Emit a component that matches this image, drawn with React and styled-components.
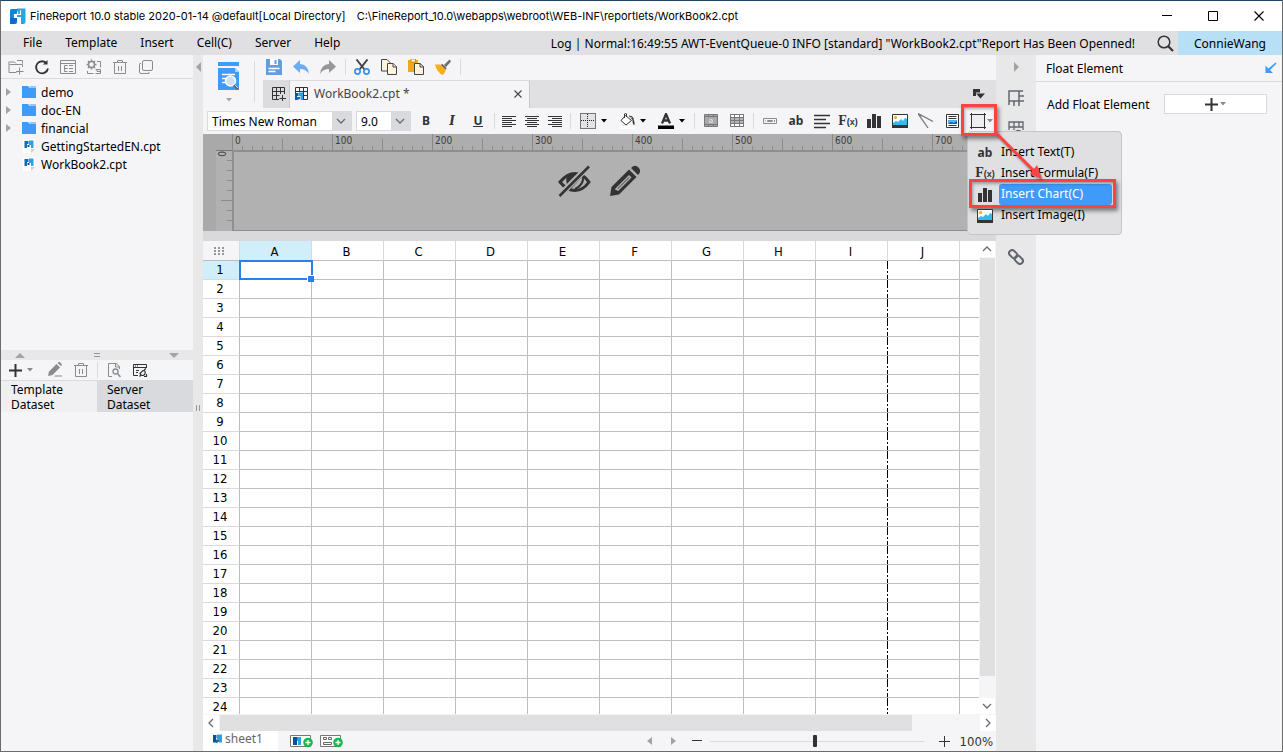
import React from "react";
import styled, { createGlobalStyle, css } from "styled-components";

const c = {
  panel: "#f5f5f7",
  bar: "#e0e0e3",
  split: "#e8e8e8",
  line: "#d9dadd",
  blue: "#3f9bf9",
  ink: "#333334",
};

const Global = createGlobalStyle`
  * { box-sizing: border-box; }
  body {
    margin: 0;
    font: 12px/15px "Noto Sans", "DejaVu Sans Condensed", sans-serif;
    color: #000;
  }
  button, select, input { font: inherit; color: inherit; }
  button { border: 0; padding: 0; background: none; }
  svg { display: block; }
`;

/* ---------- window frame ---------- */
const Window = styled.div`
  display: flex;
  flex-direction: column;
  height: 100vh;
  min-height: 480px;
  border: 1px solid #6b6b6b;
  border-top-color: #1c4568;
  background: ${c.panel};
  overflow: hidden;
`;
const TitleBar = styled.header`
  display: flex;
  align-items: center;
  flex: none;
  height: 30px;
  padding-left: 8px;
  background: #fff;
  font: 11px/15px Inter, "Noto Sans", sans-serif;
  white-space: pre;
`;
const TitleText = styled.span`
  margin-left: 4px;
`;
const TitlePath = styled.span`
  margin-left: 11px;
  flex: 1;
`;
const WindowButton = styled.button`
  display: grid;
  place-items: center;
  width: 46px;
  height: 30px;
`;
const MenuBar = styled.nav`
  display: flex;
  align-items: center;
  flex: none;
  height: 24px;
  padding-left: 11px;
  background: ${c.bar};
  white-space: nowrap;
`;
const MenuItem = styled.button`
  height: 24px;
  padding: 0 12px 1px 11px;
`;
const LogText = styled.span`
  margin-left: auto;
`;
const SearchButton = styled.button`
  display: grid;
  place-items: center;
  width: 43px;
  padding-left: 18px;
`;
const UserButton = styled.button`
  width: 104px;
  height: 24px;
  background: #b7dff5;
`;
const Body = styled.div`
  display: flex;
  flex: 1;
  min-height: 0;
`;

/* ---------- left side ---------- */
const Side = styled.aside`
  display: flex;
  flex-direction: column;
  flex: none;
  width: 192px;
`;
const SideTools = styled.div`
  display: flex;
  align-items: center;
  flex: none;
  height: ${(p) => p.$h}px;
  padding-left: 2px;
  border-bottom: 1px solid ${c.line};
`;
const Tool = styled.button`
  display: grid;
  place-items: center;
  flex: none;
  width: ${(p) => p.$w || 26}px;
  height: 22px;
  color: ${c.ink};
`;
const Tree = styled.ul`
  flex: 268 1 0;
  min-height: 0;
  margin: 0;
  padding: 4px 0 0;
  list-style: none;
  overflow: hidden;
`;
const TreeRow = styled.li`
  display: flex;
  align-items: center;
  height: 18px;
  padding-left: 5px;
`;
const TreeSlot = styled.span`
  width: ${(p) => p.$w}px;
  margin-right: ${(p) => p.$gap}px;
`;
const SplitBar = styled.div`
  display: flex;
  align-items: center;
  justify-content: space-between;
  flex: none;
  height: 10px;
  padding: 0 14px;
  background: ${c.split};
`;
const DataSets = styled.section`
  flex: 392 1 0;
  min-height: 0;
`;
const DataTabs = styled.div`
  display: flex;
`;
const DataTab = styled.button`
  flex: 1 1 0;
  min-width: 0;
  height: 31px;
  padding: 0 30px 0 10px;
  text-align: left;
  background: ${(p) => (p.$on ? "#f0f0f2" : "#d9dadd")};
`;
const VSplit = styled.div`
  display: flex;
  flex-direction: column;
  align-items: center;
  justify-content: space-between;
  flex: none;
  width: 10px;
  padding: 7px 0 340px;
  background: ${c.split};
`;

/* ---------- centre ---------- */
const Main = styled.main`
  display: flex;
  flex-direction: column;
  flex: 1;
  min-width: 0;
`;
const TopArea = styled.div`
  display: flex;
  flex: none;
  height: 53px;
`;
const PreviewButton = styled.button`
  display: flex;
  flex-direction: column;
  align-items: center;
  gap: 7px;
  flex: none;
  width: 51px;
  padding-top: 7px;
`;
const TopRule = styled.div`
  width: 1px;
  margin: 6px 8px 6px 0;
  background: ${c.line};
`;
const TopRight = styled.div`
  flex: 1;
  min-width: 0;
`;
const QuickTools = styled.div`
  display: flex;
  align-items: center;
  height: 25px;
  padding: 0 0 2px 3px;
`;
const QuickTool = styled.button`
  width: 16px;
  margin-right: 11px;
`;
const QuickRule = styled.span`
  width: 1px;
  height: 16px;
  margin: 0 8px 0 -2px;
  background: ${c.line};
`;
const TabStrip = styled.div`
  display: flex;
  align-items: center;
  height: 28px;
  background: ${c.bar};
`;
const AddTab = styled.button`
  display: grid;
  place-items: center;
  width: 27px;
  height: 28px;
  padding-left: 6px;
  border-right: 1px solid #c9c9cc;
  background: #dcdcdf;
`;
const FileTab = styled.div`
  display: flex;
  align-items: center;
  width: 240px;
  height: 28px;
  padding: 0 7px 2px 5px;
  border-right: 1px solid #c9c9cc;
  border-top: 1px solid ${c.line};
  background: ${c.panel};
  color: #444;
`;
const FileName = styled.span`
  flex: 1;
  margin-left: 5px;
`;
const TabMenu = styled.button`
  margin: 0 11px 0 auto;
`;
const FormatBar = styled.div`
  display: flex;
  align-items: center;
  flex: none;
  height: 26px;
  padding-left: 4px;
`;
const SelectBox = styled.label`
  position: relative;
  display: flex;
  width: ${(p) => p.$w}px;
  height: 20px;
  margin-right: ${(p) => p.$gap}px;
  border: 1px solid ${c.line};
  background: linear-gradient(to left, ${c.line} 19px, #fff 19px);
`;
const Select = styled.select`
  flex: 1;
  width: 100%;
  padding: 0 0 0 4px;
  border: 0;
  background: none;
  appearance: none;
`;
const SelectArrow = styled.span`
  position: absolute;
  right: 5px;
  top: 4px;
  pointer-events: none;
`;
const DropTool = styled.button`
  display: flex;
  align-items: center;
  gap: 5px;
  flex: none;
  width: 39px;
  height: 22px;
  padding-left: 6px;
`;
const FormatRule = styled.span`
  flex: none;
  width: 1px;
  height: 16px;
  margin: 0 3px;
  background: ${c.line};
`;
const Letter = styled.span`
  font-weight: bold;
  font-size: 12px;
  line-height: 14px;
  color: ${c.ink};
  ${(p) => p.$italic && css`font-style: italic; font-family: "DejaVu Serif", serif;`}
  ${(p) => p.$under && css`border-bottom: 1px solid ${c.ink}; line-height: 11px;`}
`;
const Fx = styled.span`
  font: bold 14px/15px "Liberation Serif", serif;
  color: ${c.ink};
`;
const FxSmall = styled.span`
  font: bold 9px/15px "Liberation Sans", sans-serif;
`;

/* insert drop-down and its call-outs */
const InsertWrap = styled.div`
  position: relative;
  flex: none;
  z-index: 5;
`;
const InsertButton = styled.button`
  display: flex;
  align-items: center;
  height: 22px;
  padding-left: 4px;
`;
const Mark = styled.span`
  position: absolute;
  border: 3px solid #fc4343;
  box-shadow: 2px 3px 4px rgba(0, 0, 0, 0.45), inset 1px 2px 3px rgba(0, 0, 0, 0.3);
  pointer-events: none;
`;
const ButtonMark = styled(Mark)`
  left: -4px;
  top: -6px;
  width: 36px;
  height: 32px;
`;
const ItemMark = styled(Mark)`
  inset: -5px -4px -3px 1px;
`;
const Arrow = styled.svg`
  position: absolute;
  left: 29px;
  top: 21px;
  pointer-events: none;
  filter: drop-shadow(1px 2px 1px rgba(0, 0, 0, 0.35));
`;
const Menu = styled.ul`
  position: absolute;
  left: 2px;
  top: 21px;
  width: 155px;
  height: 104px;
  margin: 0;
  padding: 10px 9px 0 0;
  list-style: none;
  border: 1px solid #c6c6c9;
  border-radius: 4px;
  background: ${c.bar};
`;
const MenuRow = styled.li`
  position: relative;
`;
const MenuAction = styled.button`
  display: flex;
  align-items: center;
  width: 100%;
  height: 21px;
  white-space: nowrap;
  text-align: left;
`;
const MenuIcon = styled.span`
  display: grid;
  place-items: center;
  width: 31px;
  padding-left: 3px;
`;
const MenuLabel = styled.span`
  flex: 1;
  padding: 2px 0 4px 2px;
  border-radius: 3px;
  ${(p) => p.$on && css`background: ${c.blue}; color: #fff;`}
`;

/* rulers */
const RulerArea = styled.div`
  flex: none;
  display: grid;
  grid-template: 16px 81px / 29px 1fr;
  height: 97px;
  background: #a9a9a9;
`;
const HRuler = styled.div`
  grid-column: 2;
  display: flex;
  overflow: hidden;
  background: #adadad;
`;
const Segment = styled.span`
  flex: 0 0 100px;
  padding-left: 2px;
  border-left: 1px solid #888;
  font: 10px/14px "DejaVu Sans Condensed", sans-serif;
  color: #3c3c3c;
  background:
    linear-gradient(#8c8c8c, #8c8c8c) 49px 100% / 1px 11px no-repeat,
    repeating-linear-gradient(to right, transparent 0 9px, #8c8c8c 9px 10px) 0 100% / 99px 4px no-repeat;
`;
const VRuler = styled.div`
  margin-left: 13px;
  border-top: 1px solid #777;
  font: 10px/10px "DejaVu Sans Condensed", sans-serif;
  color: #3c3c3c;
  background:
    linear-gradient(#8c8c8c, #8c8c8c) 100% 49px / 11px 1px no-repeat,
    repeating-linear-gradient(to bottom, transparent 0 9px, #8c8c8c 9px 10px) 100% 0 / 5px 79px no-repeat,
    #b1b1b1;
`;
const VLabel = styled.span`
  display: block;
  width: 10px;
  writing-mode: vertical-rl;
`;
const Stage = styled.div`
  display: flex;
  justify-content: center;
  align-items: flex-start;
  gap: 18px;
  padding: 13px 32px 0 0;
  border: solid #8f8f8f;
  border-width: 2px 0 1px 2px;
  background: #b1b1b1;
`;
const Gap = styled.div`
  flex: none;
  height: 10px;
  background: #d9d9db;
`;

/* sheet */
const SheetArea = styled.div`
  display: flex;
  flex: 1;
  min-height: 0;
`;
const SheetView = styled.div`
  flex: 1;
  min-width: 0;
  overflow: hidden;
  background: #fff;
`;
const Sheet = styled.table`
  width: 100%;
  table-layout: fixed;
  border-collapse: separate;
  border-spacing: 0;
  font: 13px/15px "DejaVu Sans Condensed", sans-serif;
`;
const Col = styled.col`
  width: ${(p) => (p.$w ? p.$w + "px" : "auto")};
`;
const HeadCell = styled.th`
  height: ${(p) => (p.$row ? 19 : 20)}px;
  padding: ${(p) => (p.$row ? "0 2px 2px 0" : "2px 2px 0 0")};
  border: solid ${c.line};
  border-width: 0 ${(p) => (p.$last ? 0 : 1)}px 1px 0;
  border-bottom-color: ${(p) => (p.$row ? c.line : "#bdbdbd")};
  border-right-color: ${(p) => (p.$row ? "#bdbdbd" : c.line)};
  font-weight: normal;
  background: ${(p) => (p.$on ? "#d0effb" : p.$corner ? c.panel : "#fff")};
`;
const Cell = styled.td`
  position: relative;
  height: 19px;
  padding: 0;
  border: solid #bdbdbd;
  border-width: 0 ${(p) => (p.$last ? 0 : 1)}px 1px 0;
  ${(p) => p.$page && css`
    border-right: 0;
    background: repeating-linear-gradient(to bottom, #000 0 8px, #fff 8px 10px, #000 10px 12px, #fff 12px 14px) 100% 0 / 1px 100% no-repeat;
  `}
`;
const Selection = styled.span`
  position: absolute;
  z-index: 1;
  inset: -1px -2px -1px -1px;
  border: 2px solid #2d7ee9;
  &::after {
    content: "";
    position: absolute;
    right: -3px;
    bottom: -4px;
    width: 6px;
    height: 6px;
    background: #2d7ee9;
    border: solid #fff;
    border-width: 1px 0 0 1px;
  }
`;
const VScroll = styled.div`
  display: flex;
  flex-direction: column;
  flex: none;
  width: 17px;
`;
const HScroll = styled.div`
  display: flex;
  flex: none;
  height: 17px;
  padding-top: 1px;
`;
const ScrollButton = styled.button`
  display: grid;
  place-items: center;
  flex: none;
  width: 16px;
  height: 16px;
  background: #fff;
`;
const Track = styled.div`
  flex: 1;
  display: flex;
  flex-direction: ${(p) => (p.$col ? "column" : "row")};
  padding: ${(p) => (p.$col ? "1px 1px 0 1px" : "0 0 0 1px")};
`;
const Thumb = styled.div`
  flex: 0 0 ${(p) => p.$size};
  background: #e0e0e0;
`;
const Footer = styled.footer`
  display: flex;
  align-items: center;
  flex: none;
  height: 20px;
  padding-right: 3px;
  color: #333;
`;
const SheetTab = styled.button`
  display: flex;
  align-items: center;
  gap: 3px;
  width: 75px;
  height: 20px;
  padding: 0 0 5px 10px;
  background: #fff;
  color: #666;
`;
const AddSheet = styled.button`
  margin-left: ${(p) => p.$gap}px;
`;
const Spacer = styled.span`
  flex: 1;
`;
const FootButton = styled.button`
  display: grid;
  place-items: center;
  width: ${(p) => p.$w}px;
`;
const Zoom = styled.input`
  width: 214px;
  height: 14px;
  margin: 0 10px 0 1px;
  appearance: none;
  background: linear-gradient(${c.line}, ${c.line}) 0 50% / 100% 1px no-repeat;
  &::-webkit-slider-thumb {
    appearance: none;
    width: 4px;
    height: 12px;
    border-radius: 1px;
    background: ${c.ink};
  }
`;
const ZoomValue = styled.output`
  width: 39px;
  font: 13px/15px "DejaVu Sans Condensed", sans-serif;
  text-align: right;
`;

/* ---------- right side ---------- */
const IconStrip = styled.div`
  display: flex;
  flex-direction: column;
  align-items: center;
  flex: none;
  width: 40px;
  background: ${c.split};
`;
const StripButton = styled.button`
  display: grid;
  place-items: center;
  width: 40px;
  height: ${(p) => p.$h}px;
  margin-bottom: ${(p) => p.$gap || 0}px;
`;
const Inspector = styled.aside`
  flex: none;
  width: 246px;
`;
const InspectorHead = styled.div`
  display: flex;
  align-items: center;
  justify-content: space-between;
  height: 27px;
  padding: 0 5px 0 10px;
  border-bottom: 1px solid ${c.line};
`;
const InspectorRow = styled.div`
  display: flex;
  align-items: center;
  justify-content: space-between;
  padding: 12px 15px 0 11px;
`;
const AddFloat = styled.button`
  display: flex;
  align-items: center;
  justify-content: center;
  gap: 2px;
  width: 103px;
  height: 20px;
  border: 1px solid ${c.line};
  background: #fff;
`;

/* ---------- icons ---------- */
const Svg = ({ w = 16, h = 16, s = "none", f = "none", sw = 1, children }) => (
  <svg width={w} height={h} viewBox={`0 0 ${w} ${h}`} stroke={s} fill={f} strokeWidth={sw} aria-hidden="true">
    {children}
  </svg>
);
const G = "#8b8b8e";

const Caret = ({ color = G }) => (
  <Svg w={6} h={4} f={color}><path d="M0 0h6L3 3.5z" /></Svg>
);
const Tri = ({ dir, w = 5, h = 8 }) => (
  <Svg w={w} h={h} f="#a3a3a6">
    <path d={{ r: `M0 0L${w} ${h / 2}L0 ${h}z`, l: `M${w} 0L0 ${h / 2}L${w} ${h}z`, u: `M0 ${h}L${w / 2} 0L${w} ${h}z`, d: `M0 0L${w / 2} ${h}L${w} 0z` }[dir]} />
  </Svg>
);
const Chevron = ({ dir = "d" }) => (
  <Svg w={10} h={10} s="#6c6c6f" sw={1.3}>
    <path d={{ d: "M1 3l4 4 4-4", u: "M1 7l4-4 4 4", l: "M7 1L3 5l4 4", r: "M3 1l4 4-4 4" }[dir]} />
  </Svg>
);
const Logo = () => (
  <Svg w={17} h={17}>
    <path d="M1 2.500Q1 1 2.500 1H8v5H5v4H1z" fill="#0b86d8" />
    <path d="M1 10h7v4q0 2-2 2H1z" fill="#0a6fc4" />
    <path d="M8 0.500h8.500V14q0 2-2 2H12V9H8z" fill="#22a9e4" />
    <path d="M8.500 3.500v3H5.500v3h6M11.500 2.500v4h-3" stroke="#fff" strokeWidth="1.200" />
  </Svg>
);
const MiniLogo = () => (
  <Svg w={9} h={9}>
    <path d="M0 1h3.500v3H3v4.500H0z" fill="#0c4f9c" />
    <path d="M4 0.500h5V8.500H6V5.500H4z" fill="#29a3df" />
    <path d="M3 5.500h3v2L4 9H3z" fill="#0b6fc0" />
  </Svg>
);
const CptFile = () => (
  <Svg w={14} h={14}>
    <path d="M1 0h12v9l-4 5H1z" fill="#fff" />
    <path d="M9 14v-4h4z" fill="#cfcfd1" />
    <path d="M2.500 2h4v3h-1.500v4H2.500z" fill="#0c6cc0" />
    <path d="M7 1.500h4.500V9H9V6H7z" fill="#29a3df" />
    <path d="M5.500 6h2v2h-2z" fill="#0c4f9c" />
  </Svg>
);
const Folder = () => (
  <Svg w={14} h={12} f={c.blue}>
    <path d="M0 0h6l1.500 2H14v10H0z" />
    <path d="M7 0.500h7v1H8z" />
  </Svg>
);
const NewFolder = () => (
  <Svg s={G}>
    <path d="M8.500 13.500h-7.500v-11M1.500 5.500h13V8M1.500 3h5l1.500 1.500M9 1.500h5.500v3M11.500 8.500v7M8 12.500h7.500" />
  </Svg>
);
const Refresh = () => (
  <Svg s="#333" sw={1.800}>
    <path d="M12.800 4.500A6 6 0 1 0 14 9.500" /><path d="M13.500 1v4.500H9z" fill="#333" stroke="none" />
  </Svg>
);
const ListWin = () => (
  <Svg s={G}>
    <path d="M0.500 1.500h15v13H0.500zM0.500 4.500h15M4.500 6.500v6h3M4.500 9.500h3M4.500 6.500h3M9 6.500h4M9 9.500h4M9 12.500h4" />
  </Svg>
);
const GearBox = () => (
  <Svg s={G}>
    <circle cx="5.500" cy="5.500" r="3" strokeWidth="1.500" /><path d="M5.500 0.500v2M5.500 8.500v2M0.500 5.500h2M8.500 5.500h2M2 2l1.500 1.500M7.500 7.500L9 9M2 9l1.500-1.500M7.500 3.500L9 2" strokeWidth="1.500" />
    <path d="M11 2.500h3.500v6M1.500 12v2.500h6M9.500 10.500h5v4h-5M11 10.500v2h3" />
  </Svg>
);
const Trash = () => (
  <Svg s={G}>
    <path d="M1 3.500h14M5.500 3V1.500h5V3M2.500 4v10.500h11V4M6.500 7v5M9.500 7v5" />
  </Svg>
);
const Stack = () => (
  <Svg s={G}>
    <rect x="4.500" y="1.500" width="10" height="10" rx="1.500" /><path d="M3 4.500H2Q1.500 4.500 1.500 5.500V13Q1.500 14.500 3 14.500H11V13" />
  </Svg>
);
const Plus = ({ size = 13, sw = 2, color = c.ink }) => (
  <Svg w={size} h={size} s={color} sw={sw}><path d={`M0 ${size / 2}h${size}M${size / 2} 0v${size}`} /></Svg>
);
const PencilSmall = () => (
  <Svg f={G}>
    <path d="M1 14l1-4.500L9.500 2l3.500 3.500L5.500 13zM10.500 1l1-1q1.500-.5 3.500 2.500l-1 1.500zM8 13.500h7v1H7z" />
  </Svg>
);
const DocSearch = () => (
  <Svg s={G}>
    <path d="M6 14.500H2.500v-13H10l3.500 3V7M9.500 1.500v3.500h4" /><circle cx="9.500" cy="9.500" r="2.500" strokeWidth="1.300" /><path d="M11.500 11.500l3 3.500" strokeWidth="1.500" />
  </Svg>
);
const DbLink = () => (
  <Svg s={c.ink}>
    <path d="M6 13.500H1.500V2.500h13V6M1.500 5.500h13M4 8.500h3M4 10.500h2M3 4h1M5 4h1" /><path d="M8 11.500l3-3q3 0 2 3t-4 1.500zM12 8l2-1.500M7.500 14.500l2-2M12 14.500h2.500V12" strokeWidth="1.200" />
  </Svg>
);
const Preview = () => (
  <Svg w={23} h={29}>
    <path d="M1 0h21v4H1zM1 6h17l4 4v18H1z" fill={c.blue} />
    <path d="M18 6v4h4z" fill="#a8d1fb" />
    <path d="M5 12.500h13M5 16.500h4M5 20.500h4" stroke="#fff" strokeWidth="1.500" />
    <circle cx="13.500" cy="19" r="5" fill="#cfdff0" stroke="#fff" strokeWidth="1.500" /><path d="M17 23l4 4" stroke="#666" strokeWidth="2.500" /><path d="M17.500 22.500l3.500 3.500" stroke="#ddd" />
  </Svg>
);
const Save = () => (
  <Svg>
    <path d="M0 0h14l2 2v14H0z" fill="#5f9fe0" /><path d="M4 0h8v6H4z" fill="#fff" /><path d="M8.500 1h2v4h-2z" fill="#5f9fe0" />
    <path d="M2.500 9.500h11M2.500 12.500h7" stroke="#fff" strokeWidth="1.300" />
  </Svg>
);
const Undo = () => (
  <Svg f="#6cadf2"><path d="M7 1v4q8 .5 9 10-3-5-9-5v4L0 7.500z" /></Svg>
);
const Redo = () => (
  <Svg f="#97979a"><path d="M9 1v4q-8 .5-9 10 3-5 9-5v4l7-6.500z" /></Svg>
);
const Cut = () => (
  <Svg>
    <path d="M2.500 0.500l8 10M13.500 0.500l-8 10" stroke="#444" strokeWidth="2" />
    <circle cx="3.500" cy="12.500" r="2.600" stroke="#3f8fe8" strokeWidth="1.700" /><circle cx="12.500" cy="12.500" r="2.600" stroke="#3f8fe8" strokeWidth="1.700" />
  </Svg>
);
const Copy = () => (
  <Svg s="#444" f="#fff5df">
    <path d="M0.500 0.500h5.500l3 3v8.500h-8.500z" /><path d="M6.500 4.500h5.500l3.500 3v8h-9z" /><path d="M12 4.500v3.500h3.500" />
  </Svg>
);
const Paste = () => (
  <Svg>
    <path d="M0 1h10v12H0z" fill="#f3a51c" /><path d="M3 0h4.500v3H3z" fill="#fff" stroke="#d48a10" />
    <path d="M6.500 4.500h5.500l3.500 3v8h-9z" fill="#fff5df" stroke="#444" /><path d="M12 4.500v3.500h3.500" stroke="#444" />
  </Svg>
);
const Brush = () => (
  <Svg>
    <path d="M14.500 0.500L16 2.500l-5 5.500-2-2z" fill="#6b6f7c" /><path d="M6.500 5.500l4.500 4.500" stroke="#666" strokeWidth="2.200" />
    <path d="M0 5.500l5.500 0 5.500 5.500-1 2L8 16q-6-2-8-10.500z" fill="#f6ae1b" />
  </Svg>
);
const GridPlus = () => (
  <Svg w={14} h={14} s={c.ink}>
    <path d="M7 12.500H0.500V0.500h12V7M0.500 4.500h12M0.500 8.500h7M4.500 0.500v12M8.500 0.500V7M10.500 8v6M7.500 11.500h6.500" />
  </Svg>
);
const GridDoc = () => (
  <Svg w={14} h={14}>
    <path d="M0.500 6V0.500h12v12H8M0.500 4.500h12M4.500 0.500v4M8.500 0.500v12M8.500 8.500h4" stroke={c.ink} />
    <path d="M0 6h3.500v3H2v4H0z" fill="#0c5aa8" /><path d="M4 5.500h4V13H5.500V9H4z" fill="#29a3df" /><path d="M2 10h3v2l-3 1z" fill="#0c6cc0" />
  </Svg>
);
const Cross = ({ size = 8, color = "#444" }) => (
  <Svg w={size} h={size} s={color} sw={1.100}><path d={`M.5 .5L${size - 0.5} ${size - 0.5}M${size - 0.5} .5L.5 ${size - 0.5}`} /></Svg>
);
const TabMenuIcon = () => (
  <Svg w={13} h={10} f={c.ink}><path d="M1 0h7v3.500H4V7H1zM4 4.500h9L8.500 9.500z" /></Svg>
);
const Align = ({ rows, w = 15, h = 12, step = 2, sw = 1 }) => (
  <Svg w={w} h={h} s={c.ink} sw={sw}>
    {rows.map(([x, len], i) => <path key={i} d={`M${x} ${i * step + 1.5}h${len}`} />)}
  </Svg>
);
const Borders = () => (
  <Svg s="#222"><rect x=".5" y=".5" width="15" height="15" fill="#e3e3e6" stroke="#000" strokeDasharray="1 1" /><path d="M7.500 1v14M1 7.500h14" strokeDasharray="1 1" /></Svg>
);
const Fill = () => (
  <Svg>
    <path d="M0 13h16v3H0z" fill="#fff" /><path d="M6.500 2.500l6 5-5.500 4.500-5-4.500z" fill="#fff" stroke="#333" /><path d="M5.500 5V1q1.500-1.500 2 0v3M10 3q4 0 4.500 3" stroke="#333" />
    <path d="M11 4q5 1 4.500 8-2 0-2-5z" fill="#333" />
  </Svg>
);
const FontColor = () => (
  <Svg>
    <path d="M0 12.500h16v3.500H0z" fill="#000" /><path d="M4 10.500L8 1 12 10.500M5.500 7.500h5" stroke={c.ink} strokeWidth="2.300" />
  </Svg>
);
const MergeCells = () => (
  <Svg w={14} h={14} s="#77777a">
    <path d="M.5 .5h13v12H.5z" fill="#a9a9ab" /><path d="M.5 2.500h13M.5 10.500h13M4.500 .5v2M9.500 .5v2M4.500 10.500v2M9.500 10.500v2" /><path d="M5.500 5.500h3v3h-3v-1.500h3" stroke="#d5d5d7" />
  </Svg>
);
const SplitCells = () => (
  <Svg w={14} h={14} s="#77777a">
    <path d="M.5 .5h13v12H.5z" fill="#fff" /><path d="M0 3h14v7H0z" fill="#b5b5b7" stroke="none" /><path d="M.5 .5h13v12H.5zM.5 3.500h13M.5 6.500h13M.5 9.500h13M4.500 .5v12M9.500 .5v12" />
  </Svg>
);
const Widget = () => (
  <Svg w={14} h={6} s={G}><path d="M.5 .5h13v5H.5zM2.500 2.500v1M4.500 2.500h5v1h-5zM11.500 2v2" /></Svg>
);
const Chart = () => (
  <Svg f={c.ink}><path d="M1 6h4v9H1zM6 1h4v14H6zM11 3h4v12h-4z" /></Svg>
);
const Picture = () => (
  <Svg w={16} h={14}>
    <path d="M.5 .5h15v13H.5z" fill="#fff" stroke={c.ink} /><path d="M0 11h16v3H0z" fill={c.ink} /><circle cx="3.500" cy="3.500" r="1.700" fill="#f2b03c" />
    <path d="M1 11V9l3-2 2 1 3-3 2 2 2-3 2 1v6z" fill="#35b9f1" />
  </Svg>
);
const Slash = () => (
  <Svg s="#77777a" sw={1.300}><path d="M0 .5l15 8M0 .5l10 14.500M0 1l4 2" /></Svg>
);
const SubReport = () => (
  <Svg w={13} h={14}>
    <path d="M.5 .5h12v13H.5z" fill="#fff" stroke={c.ink} /><path d="M2.500 2.500h8M2.500 4.500h8M2.500 11.500h8" stroke={c.ink} /><path d="M2 6h9v4H2z" fill="#4db1f0" /><path d="M2 10l3-2 3 1 3-2v3z" fill="#0d5da8" />
  </Svg>
);
const FrameIcon = () => (
  <Svg w={18} h={16} s="#333"><path d="M2.500 1.500h13v13h-13z" fill="#eeeef0" /><path d="M1 1.500h16M1 14.500h16M2.500 0v16M15.500 0v16" /></Svg>
);
const EyeOff = () => (
  <Svg w={33} h={32}>
    <path d="M2 17Q9 8.500 17 8.500T31 17Q25 25.500 17 25.500T2 17z" stroke="#333" strokeWidth="3" />
    <path d="M9 11q8-4 15 1l-11 12q-7-6-4-13z" fill="#333" /><path d="M25 11q1 9-8 13" stroke="#333" strokeWidth="2" />
    <path d="M30.500 1.500L1 31" stroke="#b1b1b1" strokeWidth="6" /><path d="M31 1.500L1.500 31" stroke="#333" strokeWidth="2.500" />
  </Svg>
);
const PencilBig = () => (
  <Svg w={32} h={32}>
    <path d="M1 31l1.500-9L20 4.500l7.500 7.500L10 29.500z" fill="#333" /><path d="M7 24L20 11l1.500 1.500L9 25z" fill="none" stroke="#b1b1b1" strokeWidth="1.500" />
    <path d="M22 3q4-4 7.500-.5T29 10z" fill="#333" />
  </Svg>
);
const SearchIcon = () => (
  <Svg w={17} h={17} s="#333" sw={1.500}><circle cx="7" cy="7" r="5.800" /><path d="M11 11l5 5" strokeWidth="2.200" /></Svg>
);
const CellAttr = () => (
  <Svg s="#62666f" sw={1.500}><path d="M1 15V1h14M1 11h15M11 1v15M11 6h5M6 11v5M1 1v14" /></Svg>
);
const CellEye = () => (
  <Svg s="#62666f" sw={1.300}><path d="M1 9V1h14v8M1 6h14M6 1v8M11 1v5M6 12q4-5 9 0-4 5-9 0z" /><circle cx="10.500" cy="12" r="1.500" /></Svg>
);
const LinkIcon = () => (
  <Svg s="#62666f" sw={2}>
    <rect x="-3" y="-4.500" width="6" height="9" rx="3" transform="translate(5.200 5.200) rotate(-45)" /><rect x="-3" y="-4.500" width="6" height="9" rx="3" transform="translate(10.800 10.800) rotate(-45)" />
  </Svg>
);
const PinArrow = () => (
  <Svg w={12} h={12} f={c.blue}><path d="M10.500 0.500L11.500 1.500 5 8 8 11H0.500V3.500L3.500 6.500z" /></Svg>
);
const DotGrid = () => (
  <Svg w={12} h={9} f="#97979a">
    {[0, 4, 8].map((x) => [0, 3, 6].map((y) => <rect key={`${x}-${y}`} x={x} y={y} width="2" height="2" />))}
  </Svg>
);
const AddSheetIcon = ({ kind }) => (
  <Svg w={23} h={14}>
    <path d="M.5 1.500h20v11H.5z" fill="#fff" stroke="#777" />
    {kind === "report" ? (
      <><path d="M3 3h4v8H3z" fill="#0c4f9c" /><path d="M7 3h4v8H8V7H7z" fill="#29a3df" /></>
    ) : (
      <path d="M3.500 3.500h3v2h-3zM8.500 3.500h3v2h-3zM3.500 8.500h8v2h-8z" stroke="#666" />
    )}
    <circle cx="18" cy="8.500" r="4.800" fill="#17b84e" /><path d="M15.500 8.500h5M18 6v5" stroke="#fff" strokeWidth="1.300" />
  </Svg>
);
const Formula = () => <Fx>F<FxSmall>(x)</FxSmall></Fx>;
const Ab = () => <Letter>ab</Letter>;

/* ---------- data ---------- */
const menus = ["File", "Template", "Insert", "Cell(C)", "Server", "Help"];
const tree = [
  ["demo", true], ["doc-EN", true], ["financial", true],
  ["GettingStartedEN.cpt", false], ["WorkBook2.cpt", false],
];
const columns = ["A", "B", "C", "D", "E", "F", "G", "H", "I", "J", ""];
const rows = Array.from({ length: 24 }, (_, i) => i + 1);
const insertItems = [
  ["Insert Text(T)", Ab], ["Insert Formula(F)", Formula],
  ["Insert Chart(C)", Chart, true], ["Insert Image(I)", Picture],
];
const sideTools = [
  ["New folder", NewFolder], ["Refresh", Refresh], ["Show path", ListWin],
  ["Manage", GearBox], ["Delete", Trash], ["Copy", Stack],
];
const left = [[0, 14], [0, 10], [0, 14], [0, 10], [0, 14], [0, 10]];
const center = [[0, 14], [2, 10], [0, 14], [2, 10], [0, 14], [2, 10]];
const right = [[0, 14], [4, 10], [0, 14], [4, 10], [0, 14], [4, 10]];

function SidePanel() {
  return (
    <Side>
      <SideTools $h={24}>
        {sideTools.map(([name, I]) => <Tool key={name} aria-label={name}><I /></Tool>)}
      </SideTools>
      <Tree>
        {tree.map(([name, folder]) => (
          <TreeRow key={name}>
            <TreeSlot $w={5} $gap={11}>{folder && <Tri dir="r" />}</TreeSlot>
            <TreeSlot $w={14} $gap={5}>{folder ? <Folder /> : <CptFile />}</TreeSlot>
            {name}
          </TreeRow>
        ))}
      </Tree>
      <SplitBar>
        <Tri dir="u" w={10} h={5} />
        <Svg w={6} h={4} s="#97979a"><path d="M0 .5h6M0 3.500h6" /></Svg>
        <Tri dir="d" w={10} h={5} />
      </SplitBar>
      <DataSets>
        <SideTools $h={21}>
          <DropTool aria-label="Add dataset"><Plus /><Caret /></DropTool>
          <Tool aria-label="Edit"><PencilSmall /></Tool>
          <Tool aria-label="Delete"><Trash /></Tool>
          <FormatRule />
          <Tool aria-label="Preview"><DocSearch /></Tool>
          <Tool aria-label="Connection"><DbLink /></Tool>
        </SideTools>
        <DataTabs>
          <DataTab $on>Template Dataset</DataTab>
          <DataTab>Server Dataset</DataTab>
        </DataTabs>
      </DataSets>
    </Side>
  );
}

function TopTools() {
  return (
    <TopArea>
      <PreviewButton aria-label="Preview"><Preview /><Caret color="#a3a3a6" /></PreviewButton>
      <TopRule />
      <TopRight>
        <QuickTools>
          <QuickTool aria-label="Save"><Save /></QuickTool>
          <QuickTool aria-label="Undo"><Undo /></QuickTool>
          <QuickTool aria-label="Redo"><Redo /></QuickTool>
          <QuickRule />
          <QuickTool aria-label="Cut"><Cut /></QuickTool>
          <QuickTool aria-label="Copy"><Copy /></QuickTool>
          <QuickTool aria-label="Paste"><Paste /></QuickTool>
          <QuickTool aria-label="Format painter"><Brush /></QuickTool>
          <QuickRule />
        </QuickTools>
        <TabStrip>
          <AddTab aria-label="New template"><GridPlus /></AddTab>
          <FileTab>
            <GridDoc /><FileName>WorkBook2.cpt *</FileName>
            <button aria-label="Close tab"><Cross /></button>
          </FileTab>
          <TabMenu aria-label="Open templates"><TabMenuIcon /></TabMenu>
        </TabStrip>
      </TopRight>
    </TopArea>
  );
}

function InsertMenu() {
  return (
    <InsertWrap>
      <InsertButton aria-label="Insert float element" aria-expanded="true"><FrameIcon /><Caret /></InsertButton>
      <Menu>
        {insertItems.map(([label, I, on]) => (
          <MenuRow key={label}>
            <MenuAction>
              <MenuIcon><I /></MenuIcon>
              <MenuLabel $on={on}>{label}</MenuLabel>
            </MenuAction>
            {on && <ItemMark />}
          </MenuRow>
        ))}
      </Menu>
      <ButtonMark />
      <Arrow width="56" height="54" viewBox="0 0 56 54" aria-hidden="true">
        <path d="M2 2l39 39" stroke="#fc4343" strokeWidth="3" /><path d="M36 43l7-9 5 14z" fill="#fc4343" />
      </Arrow>
    </InsertWrap>
  );
}

function Formatting() {
  return (
    <FormatBar>
      <SelectBox $w={145} $gap={4}>
        <Select aria-label="Font" defaultValue="t"><option value="t">Times New Roman</option></Select>
        <SelectArrow><Chevron /></SelectArrow>
      </SelectBox>
      <SelectBox $w={55} $gap={2}>
        <Select aria-label="Font size" defaultValue="9"><option value="9">9.0</option></Select>
        <SelectArrow><Chevron /></SelectArrow>
      </SelectBox>
      <Tool aria-label="Bold"><Letter>B</Letter></Tool>
      <Tool aria-label="Italic"><Letter $italic>I</Letter></Tool>
      <Tool aria-label="Underline"><Letter $under>U</Letter></Tool>
      <FormatRule />
      <Tool $w={23} aria-label="Align left"><Align rows={left} /></Tool>
      <Tool $w={23} aria-label="Align center"><Align rows={center} /></Tool>
      <Tool $w={23} aria-label="Align right"><Align rows={right} /></Tool>
      <FormatRule />
      <DropTool aria-label="Borders"><Borders /><Caret color="#000" /></DropTool>
      <DropTool aria-label="Fill color"><Fill /><Caret color="#000" /></DropTool>
      <DropTool aria-label="Font color"><FontColor /><Caret color="#000" /></DropTool>
      <FormatRule />
      <Tool aria-label="Merge cells"><MergeCells /></Tool>
      <Tool aria-label="Split cells"><SplitCells /></Tool>
      <FormatRule />
      <Tool aria-label="Widget"><Widget /></Tool>
      <Tool aria-label="Text"><Ab /></Tool>
      <Tool aria-label="Rich text"><Align w={16} h={15} step={4} sw={1.5} rows={[[0, 16], [0, 12], [0, 16], [0, 12]]} /></Tool>
      <Tool aria-label="Formula"><Formula /></Tool>
      <Tool aria-label="Chart"><Chart /></Tool>
      <Tool aria-label="Image"><Picture /></Tool>
      <Tool aria-label="Slope line"><Slash /></Tool>
      <Tool aria-label="Sub report"><SubReport /></Tool>
      <InsertMenu />
    </FormatBar>
  );
}

function SheetGrid() {
  return (
    <SheetArea>
      <SheetView>
        <Sheet>
          <colgroup>
            <Col $w={37} />
            {columns.map((n) => <Col key={n} $w={n ? 72 : 0} />)}
          </colgroup>
          <thead>
            <tr>
              <HeadCell $corner><FootButton as="span" $w={34}><DotGrid /></FootButton></HeadCell>
              {columns.map((n, i) => <HeadCell key={n} $on={i === 0} $last={!n}>{n}</HeadCell>)}
            </tr>
          </thead>
          <tbody>
            {rows.map((r) => (
              <tr key={r}>
                <HeadCell $row $on={r === 1}>{r}</HeadCell>
                {columns.map((n) => (
                  <Cell key={n} $page={n === "I"} $last={!n}>{r === 1 && n === "A" && <Selection />}</Cell>
                ))}
              </tr>
            ))}
          </tbody>
        </Sheet>
      </SheetView>
      <VScroll>
        <ScrollButton aria-label="Scroll up"><Chevron dir="u" /></ScrollButton>
        <Track $col><Thumb $size="95%" /></Track>
        <ScrollButton aria-label="Scroll down"><Chevron /></ScrollButton>
      </VScroll>
    </SheetArea>
  );
}

export default function App() {
  return (
    <Window>
      <Global />
      <TitleBar>
        <Logo />
        <TitleText>FineReport 10.0 stable 2020-01-14 @default[Local Directory]</TitleText>
        <TitlePath>C:\FineReport_10.0\webapps\webroot\WEB-INF\reportlets/WorkBook2.cpt</TitlePath>
        <WindowButton aria-label="Minimize"><Svg w={10} h={2} f="#000"><path d="M0 0h10v1H0z" /></Svg></WindowButton>
        <WindowButton aria-label="Maximize"><Svg w={10} h={10} s="#000"><path d="M.5 .5h9v9h-9z" /></Svg></WindowButton>
        <WindowButton aria-label="Close"><Cross size={10} color="#000" /></WindowButton>
      </TitleBar>
      <MenuBar>
        {menus.map((m) => <MenuItem key={m}>{m}</MenuItem>)}
        <LogText>Log | Normal:16:49:55 AWT-EventQueue-0 INFO [standard] "WorkBook2.cpt"Report Has Been Openned!</LogText>
        <SearchButton aria-label="Search"><SearchIcon /></SearchButton>
        <UserButton>ConnieWang</UserButton>
      </MenuBar>
      <Body>
        <SidePanel />
        <VSplit>
          <Tri dir="l" h={10} />
          <Svg w={4} h={6} s="#97979a"><path d="M.5 0v6M3.500 0v6" /></Svg>
        </VSplit>
        <Main>
          <TopTools />
          <Formatting />
          <RulerArea>
            <HRuler>{[0, 100, 200, 300, 400, 500, 600, 700].map((n) => <Segment key={n}>{n}</Segment>)}</HRuler>
            <VRuler><VLabel>0</VLabel></VRuler>
            <Stage>
              <button aria-label="Hide"><EyeOff /></button>
              <button aria-label="Edit"><PencilBig /></button>
            </Stage>
          </RulerArea>
          <Gap />
          <SheetGrid />
          <HScroll>
            <ScrollButton aria-label="Scroll left"><Chevron dir="l" /></ScrollButton>
            <Track><Thumb $size="91%" /></Track>
            <ScrollButton aria-label="Scroll right"><Chevron dir="r" /></ScrollButton>
          </HScroll>
          <Footer>
            <SheetTab><MiniLogo />sheet1</SheetTab>
            <AddSheet $gap={12} aria-label="Add report sheet"><AddSheetIcon kind="report" /></AddSheet>
            <AddSheet $gap={7} aria-label="Add form sheet"><AddSheetIcon kind="form" /></AddSheet>
            <Spacer />
            <FootButton $w={24} aria-label="Previous sheet"><Tri dir="l" /></FootButton>
            <FootButton $w={24} aria-label="Next sheet"><Tri dir="r" /></FootButton>
            <FootButton $w={24} aria-label="Zoom out"><Svg w={10} h={2} f="#333"><path d="M0 0h10v1H0z" /></Svg></FootButton>
            <Zoom type="range" aria-label="Zoom" defaultValue={49} />
            <FootButton $w={20} aria-label="Zoom in"><Plus size={11} sw={1} /></FootButton>
            <ZoomValue>100%</ZoomValue>
          </Footer>
        </Main>
        <IconStrip>
          <StripButton $h={24} aria-label="Collapse"><Tri dir="r" h={10} /></StripButton>
          <StripButton $h={37} aria-label="Cell element"><CellAttr /></StripButton>
          <StripButton $h={26} $gap={100} aria-label="Cell attributes"><CellEye /></StripButton>
          <StripButton $h={30} aria-label="Hyperlink"><LinkIcon /></StripButton>
        </IconStrip>
        <Inspector>
          <InspectorHead>Float Element<button aria-label="Undock"><PinArrow /></button></InspectorHead>
          <InspectorRow>
            <label htmlFor="add-float">Add Float Element</label>
            <AddFloat id="add-float"><Plus /><Caret /></AddFloat>
          </InspectorRow>
        </Inspector>
      </Body>
    </Window>
  );
}
